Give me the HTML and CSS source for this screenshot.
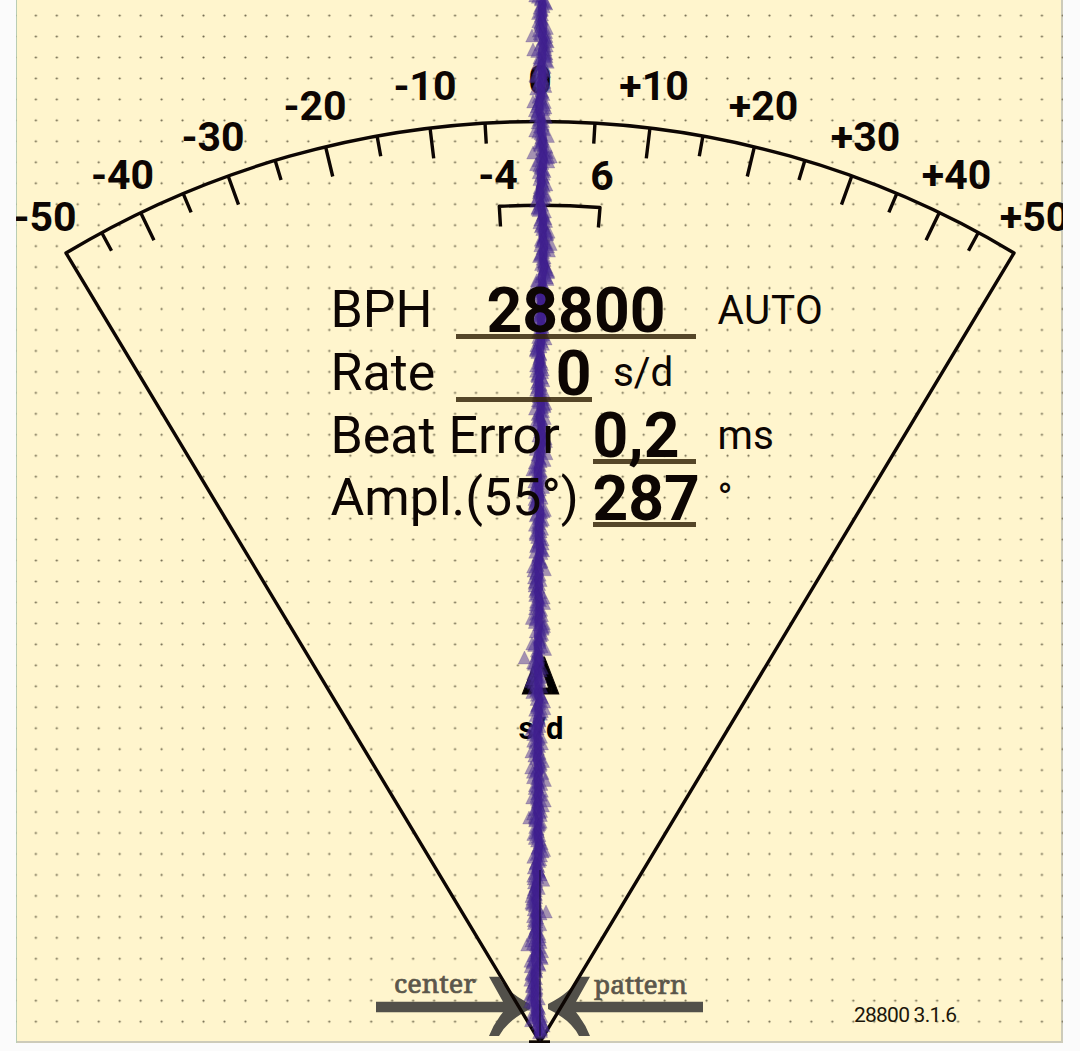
FILE: index.html
```html
<!DOCTYPE html>
<html lang="en">
<head>
<meta charset="utf-8">
<title>Timegrapher</title>
<link rel="stylesheet" href="styles.css">
</head>
<body>
<main class="panel">
  <svg class="dial" viewBox="16 0 1047 1043" width="1047" height="1043">
    <defs>
      <pattern id="dots" x="25.35" y="5.1" width="20.96" height="20.96" patternUnits="userSpaceOnUse">
        <circle class="dot" cx="10.5" cy="10.5" r="1.1"/>
      </pattern>
    </defs>
    <rect x="16" y="0" width="1047" height="1030" fill="url(#dots)"/>
    <g class="arrows">
      <path d="M376 1001.7H503L489 976.8H499Q506 992 530 1004V1009Q508 1020 499 1036H489Q494 1023 503 1012.3H376Z"/>
      <path d="M703 1001.7H576L590 976.8H579Q572 992 548 1004V1009Q571 1020 579 1036H590Q585 1023 576 1012.3H703Z"/>
    </g>
    <g class="caption">
      <text x="394" y="993" textLength="82" lengthAdjust="spacingAndGlyphs">center</text>
      <text x="594" y="993.5" textLength="93" lengthAdjust="spacingAndGlyphs">pattern</text>
    </g>
    <path class="line" d="M540 1042L66 253A920 920 0 0 1 1014 253Z"/>
    <path class="line" id="ticks"/>
    <path class="line" d="M500.5 226.5L499.3 206.3A836 836 0 0 1 600 207.5L598.4 227.5"/>
    <path class="line" d="M529 1042H550"/>
    <g class="scale">
      <text x="45" y="231">-50</text>
      <text x="122.5" y="189">-40</text>
      <text x="213" y="150.5">-30</text>
      <text x="315" y="119.5">-20</text>
      <text x="425" y="99.5">-10</text>
      <text x="540" y="93.5">0</text>
      <text x="654" y="99.5">+10</text>
      <text x="763.5" y="119.5">+20</text>
      <text x="865.5" y="150.5">+30</text>
      <text x="956.5" y="189">+40</text>
      <text x="1034.5" y="231">+50</text>
      <text x="498" y="189">-4</text>
      <text x="602" y="189.5">6</text>
    </g>
    <text class="delta" x="540.5" y="693.5">Δ</text>
    <text class="delta-unit" x="541" y="738.5">s/d</text>
    <g class="trace" id="trace"></g>
    <path class="core" id="core"/>
    <path class="needle" d="M540 870V1041"/>
    <text class="version" x="854" y="1022" textLength="103">28800 3.1.6</text>
  </svg>
  <section class="readout">
    <div class="row"><span class="label">BPH</span><span class="value wide">28800</span><span class="unit auto">AUTO</span></div>
    <div class="row"><span class="label">Rate</span><span class="value rate">0</span><span class="unit">s/d</span></div>
    <div class="row"><span class="label long">Beat Error</span><span class="value">0,2</span><span class="unit">ms</span></div>
    <div class="row"><span class="label long">Ampl.(55°)</span><span class="value">287</span><span class="unit">°</span></div>
  </section>
</main>
<script src="dial.js"></script>
</body>
</html>
```
FILE: styles.css
```css
body {
  margin: 0;
  background: #fbfbfb;
  font-family: Roboto, "Liberation Sans", sans-serif;
  color: #0d0603;
}
.panel {
  display: grid;
  width: 1047px;
  height: 1043px;
  margin-left: 16px;
  overflow: hidden;
  background: #fff5cd;
  box-shadow: inset 1px 0 #b9cdb4, inset -2px -2px #cdcbb9;
}
.dial, .readout { grid-area: 1 / 1; }
.dial { display: block; }
.dot { fill: #6e674c; }
.arrows { fill: #52504a; }
.caption {
  font-family: "Noto Serif", "DejaVu Serif", serif;
  font-size: 25px;
  fill: #5b574b;
  stroke: #5b574b;
  stroke-width: 0.7;
}
.line { fill: none; stroke: #0d0603; stroke-width: 3.4; stroke-linejoin: round; }
.scale { font-size: 41px; font-weight: 700; text-anchor: middle; fill: #0d0603; }
.delta { font-size: 51px; font-weight: 700; text-anchor: middle; stroke: #0d0603; stroke-width: 1; }
.delta-unit { font-size: 31px; font-weight: 700; text-anchor: middle; }
.version { font-size: 21px; fill: #1c160a; }
.needle { stroke: #1a0d3c; stroke-width: 2; stroke-opacity: 0.6; }
.trace { fill: #4a2d96; fill-opacity: 0.5; stroke: #35226e; stroke-opacity: 0.3; stroke-width: 0.6; }
.core { fill: none; stroke: #3d1c8e; stroke-width: 8; stroke-opacity: 0.75; stroke-linejoin: round; }
.readout {
  display: flex;
  flex-direction: column;
  padding: 276.2px 0 0 314.5px;
}
.row {
  display: flex;
  align-items: flex-end;
  height: 62.75px;
  white-space: nowrap;
}
.label { width: 125.5px; font-size: 51.9px; line-height: 1; padding-bottom: 3px; }
.long { width: 262px; }
.value {
  width: 103.5px;
  box-sizing: border-box;
  font-size: 62.4px;
  font-weight: 700;
  line-height: 47px;
  border-bottom: 5px solid rgba(52, 36, 8, 0.84);
}
.wide { width: 240px; text-align: center; }
.rate { width: 135.5px; text-align: right; }
.unit { margin-left: 21.5px; font-size: 40.4px; line-height: 1; padding-bottom: 8px; }
.auto { letter-spacing: 0.6px; }
```
FILE: dial.js
```js
const NS = "http://www.w3.org/2000/svg";
const CX = 540, CY = 1041, R = 920;

// Scale ticks: horizontal distance from the centre line and length.
const ticks = [[55, 21], [110, 31], [163, 21], [214.5, 31], [265, 21], [312, 31], [357, 21], [399.5, 31], [438.5, 21]];
let d = "";
for (const [dx, len] of ticks) {
  for (const side of [-1, 1]) {
    const x = side * dx, y = Math.sqrt(R * R - dx * dx), k = (R - len) / R;
    d += `M${CX + x} ${CY - y}L${CX + x * k} ${CY - y * k}`;
  }
}
document.getElementById("ticks").setAttribute("d", d);

// Drift of the beat trace along the strip.
const drift = [[0, 541.5], [40, 543], [80, 542], [105, 539.5], [130, 541.5], [160, 543], [195, 539.5], [225, 543], [260, 544], [300, 541], [345, 541], [372, 539], [400, 540], [430, 541.5], [480, 538], [510, 540], [570, 538.5], [625, 539], [680, 537.5], [700, 539], [740, 537], [775, 538.5], [805, 537.5], [845, 538.5], [890, 536], [935, 536], [985, 535], [1015, 536], [1040, 539.5]];
function at(y) {
  for (let i = 1; i < drift.length; i++) {
    const [y0, x0] = drift[i - 1], [y1, x1] = drift[i];
    if (y <= y1) return x0 + (x1 - x0) * (y - y0) / (y1 - y0);
  }
  return 539.5;
}
let seed = 77;
const rnd = () => (seed = (seed * 16807) % 2147483647) / 2147483647;
const marks = [[532, 36], [533, 50], [533, 102], [551, 157], [533, 153], [524.5, 658], [529, 818], [527, 945], [531, 768], [545, 801], [546, 912]];
for (let y = -4; y < 1034; y += 1.35) {
  marks.push([at(Math.max(y, 0)) + (rnd() + rnd() - 1) * 7.5, y]);
}
const trace = document.getElementById("trace");
for (const [x, y] of marks) {
  const p = document.createElementNS(NS, "path");
  p.setAttribute("d", `M${x.toFixed(1)} ${(y - 7).toFixed(1)}l6.3 13h-12.6z`);
  trace.append(p);
}
let c = "M541.5 0";
for (let y = 4; y <= 1036; y += 4) c += `L${(at(y) + (rnd() - 0.5) * 2).toFixed(1)} ${y}`;
document.getElementById("core").setAttribute("d", c);
```
